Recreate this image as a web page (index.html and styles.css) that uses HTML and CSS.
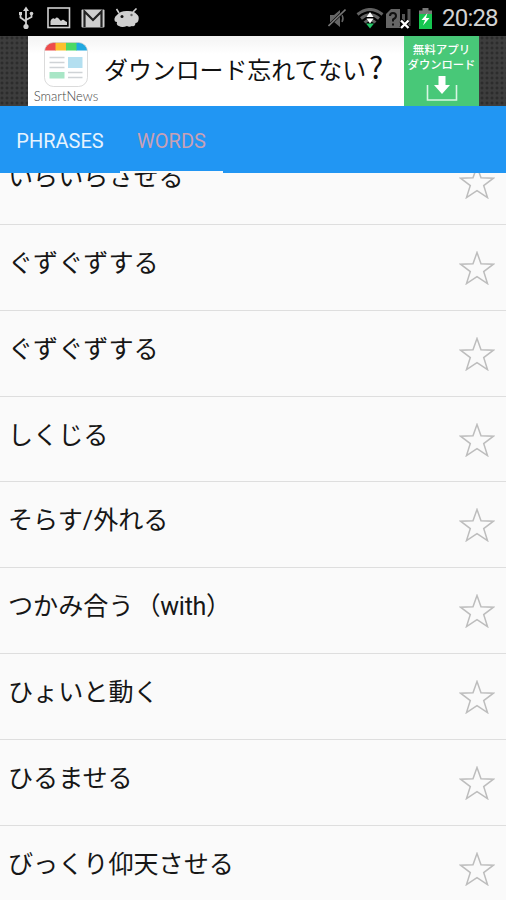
FILE: index.html
```html
<!DOCTYPE html>
<html lang="ja">
<head>
    <meta charset="UTF-8">
    <meta name="viewport" content="width=device-width, initial-scale=1.0">
    <title>Words</title>
    <link rel="stylesheet" href="styles.css">
</head>
<body>
    <!-- Shared star shape -->
    <svg class="defs" width="0" height="0">
        <symbol id="star" viewBox="0 0 36 34">
            <path d="M18 1.5 L22 12.8 L34.5 13.2 L24.7 20.6 L28.5 32.6 L18 25.6 L7.5 32.6 L11.3 20.6 L1.5 13.2 L14 12.8 Z" fill="none" stroke="#bdbdbd" stroke-width="1.5"/>
        </symbol>
    </svg>

    <div class="phone">
        <div class="status-bar">
            <div class="status-left">
                <svg width="16" height="24" viewBox="0 0 16 24" fill="none" stroke="#d0d0d0" stroke-width="1.8">
                    <path d="M8 4 V20 M2.5 8 V11.5 L8 15.5 M13.5 7 V11 L8 14"/>
                    <path d="M8 0.5 L11 5 H5 Z M1 6 H4 V9 H1 Z" fill="#d0d0d0" stroke="none"/>
                    <circle cx="13.5" cy="7.5" r="1.8" fill="#d0d0d0" stroke="none"/>
                    <circle cx="8" cy="20.5" r="2.6" fill="#d0d0d0" stroke="none"/>
                </svg>
                <svg width="24" height="22" viewBox="0 0 24 22">
                    <rect x="1" y="1" width="21.5" height="19.5" fill="none" stroke="#d0d0d0" stroke-width="1.6"/>
                    <path d="M3.5 18 V14 Q5 10 8 12 Q10 9 12.5 12.5 L14 14 Q16 11.5 18 14 L20 15 V18 Z" fill="#d0d0d0"/>
                </svg>
                <svg width="24" height="19" viewBox="0 0 24 19">
                    <rect x="0.5" y="0.5" width="23" height="18" rx="1" fill="#cfcfcf"/>
                    <path d="M3.5 18 V2.5 L12 11 L20.5 2.5 V18" fill="none" stroke="#222" stroke-width="2.2"/>
                </svg>
                <svg width="26" height="20" viewBox="0 0 26 20">
                    <path d="M5 5 L2.5 1 M19 4 L22.5 0.5" stroke="#cfcfcf" stroke-width="1.6"/>
                    <path d="M3 7 Q6 3 12.5 3 Q20 2.5 22.5 6 Q25.5 8 24.5 12 Q24 15 21.5 15 Q21 19 18 18 Q15 19.5 13 18 Q8 20 5 18 Q2 17 3 14 Q0 14 0.5 10.5 Q1 8 3 7 Z" fill="#cfcfcf"/>
                    <circle cx="8" cy="8.5" r="1.5" fill="#111"/>
                    <circle cx="17.5" cy="7" r="1.2" fill="#666"/>
                </svg>
            </div>
            <div class="status-right">
                <svg class="mute" width="18" height="21" viewBox="0 0 18 21">
                    <path d="M2 7 H6 L12 2 V19 L6 14 H2 Z" fill="#666"/>
                    <path d="M14 7 Q16 10.5 14 14" fill="none" stroke="#666" stroke-width="1.5"/>
                    <path d="M0.5 18 L17.5 1.5" stroke="#000" stroke-width="2.8"/>
                    <path d="M0.5 18 L17.5 1.5" stroke="#777" stroke-width="1.6"/>
                </svg>
                <svg class="wifi" width="28" height="21" viewBox="0 0 28 21">
                    <g fill="none" stroke="#626262" stroke-width="3">
                        <path d="M1.5 6.5 Q14 -3.5 26.5 6.5"/>
                        <path d="M5 10.5 Q14 3 23 10.5"/>
                        <path d="M8.5 14.5 Q14 9.5 19.5 14.5"/>
                    </g>
                    <path d="M14 4 L17.5 9 H10.5 Z M10.5 10.5 H17.5 L14 15.5 Z" fill="#fff"/>
                    <path d="M10 15.5 H18 L14 20.5 Z" fill="#24c466"/>
                </svg>
                <svg class="sim" width="27" height="21" viewBox="0 0 27 21">
                    <path d="M1 6 L6 1 H15 V20 H1 Z" fill="#666"/>
                    <path d="M5 8 Q5 5 8 5 Q11 5 11 8 Q11 10 8 11.5 V13.5 M8 15.5 V17.5" fill="none" stroke="#111" stroke-width="2"/>
                    <path d="M18.5 6 V18 M24 1 V18" stroke="#555" stroke-width="3"/>
                    <path d="M16 12.5 L23.5 20 M23.5 12.5 L16 20" stroke="#000" stroke-width="4.5"/>
                    <path d="M16 12.5 L23.5 20 M23.5 12.5 L16 20" stroke="#fff" stroke-width="2.4"/>
                </svg>
                <svg class="battery" width="13" height="21" viewBox="0 0 13 21">
                    <path d="M0 2.5 H3.5 V0 H9.5 V2.5 H13 V21 H0 Z" fill="#777"/>
                    <path d="M0 6 H13 V21 H0 Z" fill="#15c650"/>
                    <path d="M8.5 5 L2.5 12 H6 L4 17.5 L10.5 10 H7 Z" fill="#fff"/>
                </svg>
                <span class="time">20:28</span>
            </div>
        </div>

        <div class="ad">
            <div class="ad-banner">
                <div class="ad-logo">
                    <svg width="44" height="45" viewBox="0 0 44 45">
                        <clipPath id="app"><rect x="0.5" y="0.5" width="43" height="44" rx="9"/></clipPath>
                        <g clip-path="url(#app)">
                            <rect width="44" height="45" fill="#fff"/>
                            <rect width="12" height="8.5" fill="#ee4c4c"/>
                            <rect x="11.5" width="11" height="8.5" fill="#fbc02d"/>
                            <rect x="22" width="11" height="8.5" fill="#4cd964"/>
                            <rect x="32.5" width="12" height="8.5" fill="#20a8e0"/>
                        </g>
                        <rect x="0.5" y="0.5" width="43" height="44" rx="9" fill="none" stroke="#ccc" stroke-opacity="0.7"/>
                        <path d="M5.5 15.5 H20.5 M5.5 20.5 H20.5 M5.5 25.5 H20.5 M24 30.5 H38.5 M24 35.5 H38.5" stroke="#cfd3d6" stroke-width="1.3"/>
                        <rect x="24" y="15" width="14.5" height="11" fill="#b3dff0"/>
                        <rect x="5.5" y="30" width="15" height="6.5" fill="#a8e6c6"/>
                    </svg>
                    <span class="ad-name">SmartNews</span>
                </div>
                <div class="ad-text">ダウンロード忘れてない<span class="mark">?</span></div>
                <div class="ad-button">
                    <span class="ad-free">無料アプリ</span>
                    <span class="ad-download">ダウンロード</span>
                    <svg width="32" height="27" viewBox="0 0 32 27">
                        <path d="M1.5 10 V25 H30.5 V10" fill="none" stroke="#d8f5e4" stroke-width="1.6"/>
                        <path d="M12.5 1 H19.5 V10 H24 L16 19 L8 10 H12.5 Z" fill="#fff"/>
                    </svg>
                </div>
            </div>
        </div>

        <div class="tabs">
            <div class="tab phrases">PHRASES</div>
            <div class="tab words">WORDS</div>
        </div>

        <div class="list">
            <div class="row first"><span>いらいらさせる</span><svg class="star"><use href="#star"/></svg></div>
            <div class="row"><span>ぐずぐずする</span><svg class="star"><use href="#star"/></svg></div>
            <div class="row"><span>ぐずぐずする</span><svg class="star"><use href="#star"/></svg></div>
            <div class="row"><span>しくじる</span><svg class="star"><use href="#star"/></svg></div>
            <div class="row"><span>そらす/外れる</span><svg class="star"><use href="#star"/></svg></div>
            <div class="row"><span>つかみ合う<span class="latin">（with）</span></span><svg class="star"><use href="#star"/></svg></div>
            <div class="row"><span>ひょいと動く</span><svg class="star"><use href="#star"/></svg></div>
            <div class="row"><span>ひるませる</span><svg class="star"><use href="#star"/></svg></div>
            <div class="row"><span>びっくり仰天させる</span><svg class="star"><use href="#star"/></svg></div>
        </div>
    </div>
</body>
</html>
```
FILE: styles.css
```css
* {
    box-sizing: border-box;
}

body {
    margin: 0;
    font-family: Roboto, "Noto Sans CJK JP", sans-serif;
    background: #fafafa;
    overflow: hidden;
}

.defs {
    display: block;
}

.phone {
    width: 506px;
    height: 900px;
    display: flex;
    flex-direction: column;
    overflow: hidden;
}

/* Status bar */
.status-bar {
    height: 36px;
    flex: none;
    display: flex;
    justify-content: space-between;
    align-items: center;
    padding: 0 8px 0 18px;
    background: #000;
}

.status-left {
    display: flex;
    align-items: center;
    gap: 10px;
}

.status-left svg:first-child {
    margin-right: 3px;
}

.status-left svg:last-child {
    margin-left: -1px;
}

.status-right {
    display: flex;
    align-items: center;
}

.mute {
    margin-right: 10px;
}

.wifi {
    margin-right: 1px;
}

.sim {
    margin-right: 7px;
}

.battery {
    margin-right: 10px;
}

.time {
    font-size: 24px;
    line-height: 37px;
    width: 56px;
    letter-spacing: -0.8px;
    white-space: nowrap;
    color: #d2d2d2;
}

/* Ad banner */
.ad {
    height: 70px;
    flex: none;
    display: flex;
    padding-left: 28px;
    background: radial-gradient(circle at 2px 2px, #2c2c2c 1.2px, transparent 1.8px) 0 0 / 5px 5px, #3d3d3d;
}

.ad-banner {
    width: 451px;
    display: flex;
    background: linear-gradient(#f3f3f3, #fff 18px);
}

.ad-logo {
    width: 76px;
    padding-top: 6px;
    display: flex;
    flex-direction: column;
    align-items: center;
}

.ad-name {
    font-family: Lato, sans-serif;
    font-weight: 300;
    font-size: 13px;
    line-height: 18px;
    color: #444;
}

.ad-text {
    width: 300px;
    font-family: "Noto Sans CJK JP", sans-serif;
    font-size: 23.9px;
    line-height: 66px;
    white-space: nowrap;
    color: #111;
}

.mark {
    font-size: 30px;
    line-height: 1;
    margin-left: 3px;
}

.ad-button {
    width: 75px;
    display: flex;
    flex-direction: column;
    align-items: center;
    padding-top: 5px;
    background: #48c878;
    color: #fff;
    font-family: "Noto Sans CJK JP", sans-serif;
    font-weight: 500;
    white-space: nowrap;
}

.ad-free {
    font-size: 11.5px;
    line-height: 16px;
}

.ad-download {
    font-size: 11.3px;
    line-height: 15px;
    margin-bottom: 3px;
}

/* Tabs */
.tabs {
    height: 67px;
    flex: none;
    display: flex;
    background: #2196f3;
}

.tab {
    font-size: 20px;
    line-height: 70px;
    text-align: center;
    color: #e6f3fe;
}

.phrases {
    width: 120px;
}

.words {
    width: 103px;
    color: #c9a0b4;
    border-bottom: 2px solid #fafafa;
}

/* Word list */
.list {
    flex: 1;
    overflow: hidden;
    background: #fafafa;
}

.row {
    height: 85.85px;
    display: flex;
    justify-content: space-between;
    padding: 0 11px 0 8px;
    border-bottom: 1.5px solid #dedede;
    font-size: 25.1px;
    line-height: 78px;
    white-space: nowrap;
    color: #161616;
}

.first {
    margin-top: -34px;
}

.latin {
    letter-spacing: -0.3px;
    margin-left: 2px;
}

.star {
    width: 36px;
    height: 34px;
    margin-top: 26px;
}
```
